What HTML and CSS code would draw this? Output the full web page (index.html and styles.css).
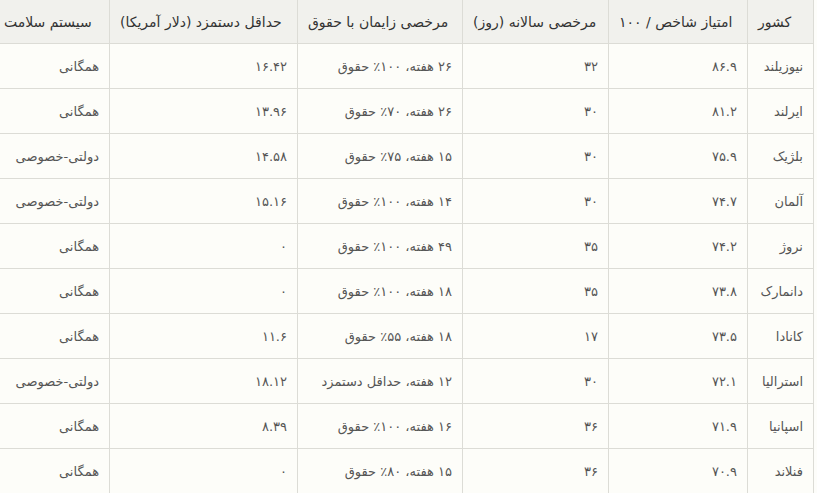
FILE: index.html
```html
<!DOCTYPE html>
<html lang="fa" dir="rtl">
<head>
<meta charset="utf-8">
<title>جدول</title>
<link rel="stylesheet" href="styles.css">
</head>
<body>
<div class="wrap">
<table class="data">
<colgroup>
<col class="c1"><col class="c2"><col class="c3"><col class="c4"><col class="c5"><col class="c6">
</colgroup>
<thead>
<tr><th>کشور</th><th>امتیاز شاخص / ۱۰۰</th><th>مرخصی سالانه (روز)</th><th>مرخصی زایمان با حقوق</th><th>حداقل دستمزد (دلار آمریکا)</th><th>سیستم سلامت</th></tr>
</thead>
<tbody>
<tr><td>نیوزیلند</td><td>۸۶.۹</td><td>۳۲</td><td>۲۶ هفته، ۱۰۰٪ حقوق</td><td>۱۶.۴۲</td><td>همگانی</td></tr>
<tr><td>ایرلند</td><td>۸۱.۲</td><td>۳۰</td><td>۲۶ هفته، ۷۰٪ حقوق</td><td>۱۳.۹۶</td><td>همگانی</td></tr>
<tr><td>بلژیک</td><td>۷۵.۹</td><td>۳۰</td><td>۱۵ هفته، ۷۵٪ حقوق</td><td>۱۴.۵۸</td><td>دولتی-خصوصی</td></tr>
<tr><td>آلمان</td><td>۷۴.۷</td><td>۳۰</td><td>۱۴ هفته، ۱۰۰٪ حقوق</td><td>۱۵.۱۶</td><td>دولتی-خصوصی</td></tr>
<tr><td>نروژ</td><td>۷۴.۲</td><td>۳۵</td><td>۴۹ هفته، ۱۰۰٪ حقوق</td><td>۰</td><td>همگانی</td></tr>
<tr><td>دانمارک</td><td>۷۳.۸</td><td>۳۵</td><td>۱۸ هفته، ۱۰۰٪ حقوق</td><td>۰</td><td>همگانی</td></tr>
<tr><td>کانادا</td><td>۷۳.۵</td><td>۱۷</td><td>۱۸ هفته، ۵۵٪ حقوق</td><td>۱۱.۶</td><td>همگانی</td></tr>
<tr><td>استرالیا</td><td>۷۲.۱</td><td>۳۰</td><td>۱۲ هفته، حداقل دستمزد</td><td>۱۸.۱۲</td><td>دولتی-خصوصی</td></tr>
<tr><td>اسپانیا</td><td>۷۱.۹</td><td>۳۶</td><td>۱۶ هفته، ۱۰۰٪ حقوق</td><td>۸.۳۹</td><td>همگانی</td></tr>
<tr><td>فنلاند</td><td>۷۰.۹</td><td>۳۶</td><td>۱۵ هفته، ۸۰٪ حقوق</td><td>۰</td><td>همگانی</td></tr>
</tbody>
</table>
</div>
</body>
</html>
```
FILE: styles.css
```css
html, body {
  margin: 0;
  padding: 0;
  background: #fdfdfa;
}
body {
  font-family: "DejaVu Sans", sans-serif;
  font-size: 13px;
  color: #555;
}
.wrap {
  padding-right: 3px;
  overflow: hidden;
}
.data {
  border-collapse: collapse;
  table-layout: fixed;
  width: 820px;
  background: #fdfdf9;
}
.c1 { width: 66px; }
.c2 { width: 139px; }
.c3 { width: 146px; }
.c4 { width: 165px; }
.c5 { width: 188px; }
.c6 { width: 116px; }
.data th,
.data td {
  border: 1px solid #dcdcd6;
  padding: 0 10px;
  white-space: nowrap;
}
.data th {
  height: 43px;
  background: #f1f1ed;
  color: #333;
  font-size: 14px;
  font-weight: normal;
  text-align: left;
  border-top: 0;
}
.data td {
  height: 44px;
  text-align: right;
}
```
